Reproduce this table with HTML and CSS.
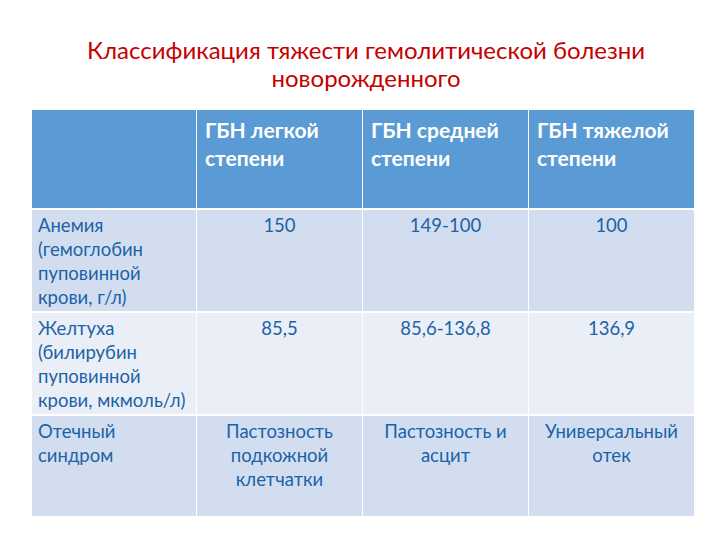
FILE: index.html
```html
<!DOCTYPE html>
<html lang="ru">
<head>
<meta charset="utf-8">
<link rel="stylesheet" href="styles.css">
</head>
<body>
<div class="slide">
  <h1 class="title">Классификация тяжести гемолитической болезни<br>новорожденного</h1>
  <div class="table">
    <div class="cell head"></div>
    <div class="cell head">ГБН легкой<br>степени</div>
    <div class="cell head">ГБН средней<br>степени</div>
    <div class="cell head">ГБН тяжелой<br>степени</div>

    <div class="cell odd label">Анемия<br>(гемоглобин<br>пуповинной<br>крови, г/л)</div>
    <div class="cell odd num">150</div>
    <div class="cell odd num">149-100</div>
    <div class="cell odd num">100</div>

    <div class="cell even label">Желтуха<br>(билирубин<br>пуповинной<br>крови, мкмоль/л)</div>
    <div class="cell even num">85,5</div>
    <div class="cell even num">85,6-136,8</div>
    <div class="cell even num">136,9</div>

    <div class="cell odd label">Отечный<br>синдром</div>
    <div class="cell odd num">Пастозность<br>подкожной<br>клетчатки</div>
    <div class="cell odd num">Пастозность и<br>асцит</div>
    <div class="cell odd num">Универсальный<br>отек</div>
  </div>
</div>
</body>
</html>
```

FILE: styles.css
```css
html, body {
  margin: 0;
  padding: 0;
  background: #ffffff;
}
.slide {
  width: 720px;
  height: 540px;
  font-family: Lato, "Open Sans", "Noto Sans", sans-serif;
  padding-top: 36px;
  box-sizing: border-box;
}
.title {
  margin: 0 0 18px 0;
  font-weight: normal;
  font-size: 24px;
  line-height: 28px;
  color: #c40000;
  text-align: center;
  padding-left: 12px;
}
.table {
  margin-left: 32px;
  width: 662px;
  display: grid;
  grid-template-columns: 164px 165px 165px 165px;
  grid-template-rows: 98px 101px 101px 100px;
  column-gap: 1px;
  row-gap: 2px;
  background: #ffffff;
}
.cell {
  box-sizing: border-box;
  padding: 3px 6px;
  font-size: 18.5px;
  line-height: 24px;
  color: #1c62a6;
}
.head {
  background: #5b9bd5;
  color: #ffffff;
  font-weight: bold;
  font-size: 21px;
  line-height: 28px;
  padding: 6px 8px;
}
.odd { background: #d2deef; }
.even { background: #eaeff7; }
.num { text-align: center; }
.label { text-align: left; }
```
